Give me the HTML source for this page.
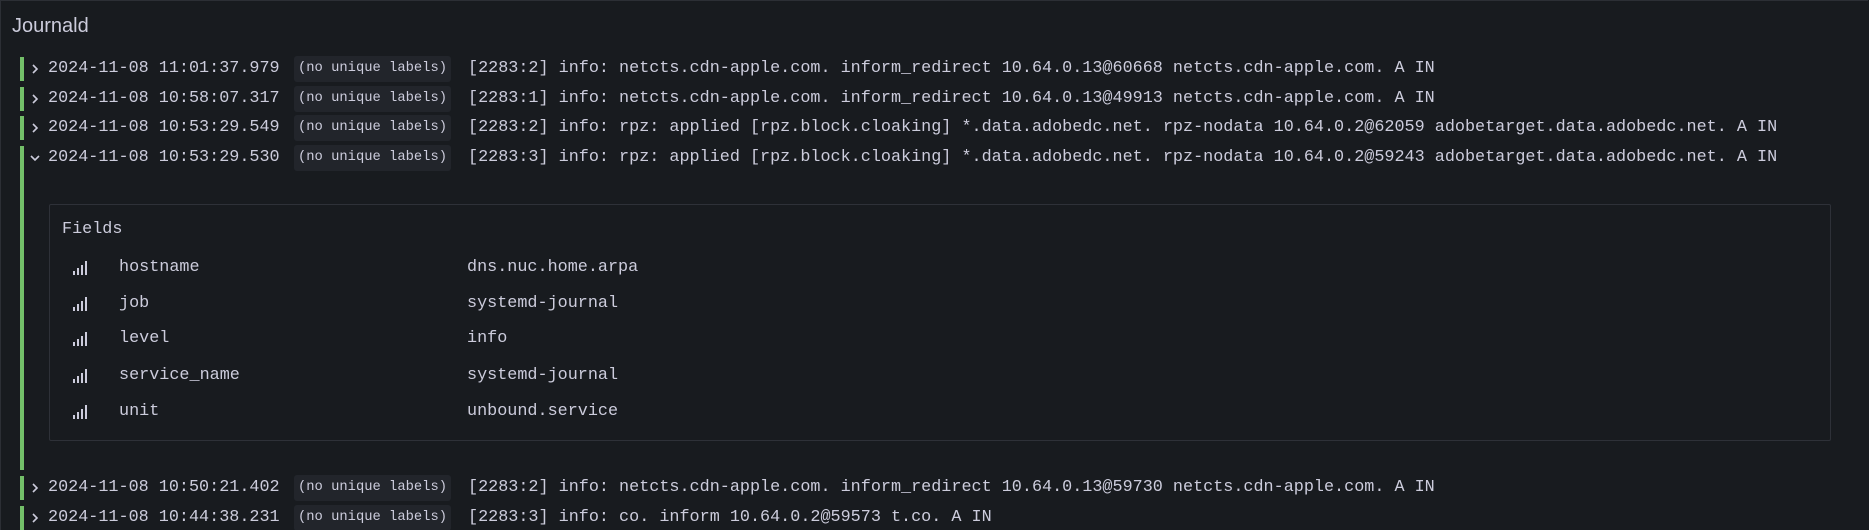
<!DOCTYPE html>
<html><head><meta charset="utf-8"><style>
html,body{margin:0;padding:0;background:#181b1f;width:1869px;height:530px;overflow:hidden}
body{position:relative;font-family:"Liberation Mono",monospace;color:#ccccdc}
.panel{position:absolute;left:0;top:0;width:1868px;height:530px;border-top:1px solid #2c2f35;border-left:1px solid #2c2f35;box-sizing:border-box}
.title{position:absolute;left:12px;top:15px;font-family:"Liberation Sans",sans-serif;font-size:20px;color:#ccccdc}
.bar{position:absolute;left:20px;width:4px;background:#73bf69}
.row{position:absolute;left:0;height:26px;line-height:26px;font-size:16.8px;white-space:pre}
.chev{position:absolute;left:30px;top:8px;width:10px;height:10px}
.ts{position:absolute;left:48px}
.badge{position:absolute;left:294px;top:0;width:157px;height:26px;background:#22252b;border-radius:3px;font-size:13.8px;text-align:center;line-height:26px}
.msg{position:absolute;left:468px}
.box{position:absolute;left:49px;top:204px;width:1782px;height:237px;border:1px solid #2e3138;border-radius:2px;box-sizing:border-box}
.fl{position:absolute;font-size:16.8px;white-space:pre;line-height:20px}
.ic{position:absolute;left:73px;width:14px;height:14px}
</style></head><body>
<div class="panel"></div>
<div class="title">Journald</div>

<div class="bar" style="top:57px;height:24px"></div>
<div class="bar" style="top:87px;height:24px"></div>
<div class="bar" style="top:116px;height:24px"></div>
<div class="bar" style="top:146px;height:324px"></div>
<div class="bar" style="top:476px;height:24px"></div>
<div class="bar" style="top:506px;height:24px"></div>

<div class="row" style="top:56px"><svg class="chev" viewBox="0 0 10 10"><path d="M3 1L7 5L3 9" stroke="#ccccdc" stroke-width="1.6" fill="none"/></svg><span class="ts">2024-11-08 11:01:37.979</span><span class="badge">(no unique labels)</span><span class="msg">[2283:2] info: netcts.cdn-apple.com. inform_redirect 10.64.0.13@60668 netcts.cdn-apple.com. A IN</span></div>
<div class="row" style="top:86px"><svg class="chev" viewBox="0 0 10 10"><path d="M3 1L7 5L3 9" stroke="#ccccdc" stroke-width="1.6" fill="none"/></svg><span class="ts">2024-11-08 10:58:07.317</span><span class="badge">(no unique labels)</span><span class="msg">[2283:1] info: netcts.cdn-apple.com. inform_redirect 10.64.0.13@49913 netcts.cdn-apple.com. A IN</span></div>
<div class="row" style="top:115px"><svg class="chev" viewBox="0 0 10 10"><path d="M3 1L7 5L3 9" stroke="#ccccdc" stroke-width="1.6" fill="none"/></svg><span class="ts">2024-11-08 10:53:29.549</span><span class="badge">(no unique labels)</span><span class="msg">[2283:2] info: rpz: applied [rpz.block.cloaking] *.data.adobedc.net. rpz-nodata 10.64.0.2@62059 adobetarget.data.adobedc.net. A IN</span></div>
<div class="row" style="top:145px"><svg class="chev" viewBox="0 0 10 10"><path d="M1 3L5 7L9 3" stroke="#ccccdc" stroke-width="1.6" fill="none"/></svg><span class="ts">2024-11-08 10:53:29.530</span><span class="badge">(no unique labels)</span><span class="msg">[2283:3] info: rpz: applied [rpz.block.cloaking] *.data.adobedc.net. rpz-nodata 10.64.0.2@59243 adobetarget.data.adobedc.net. A IN</span></div>

<div class="box"></div>
<div class="fl" style="left:62px;top:220px">Fields</div>

<svg class="ic" style="top:261px" viewBox="0 0 14 14"><rect x="0" y="10" width="2" height="4" fill="#ccccdc"/><rect x="4" y="7" width="2" height="7" fill="#ccccdc"/><rect x="8" y="4" width="2" height="10" fill="#ccccdc"/><rect x="12" y="0" width="2" height="14" fill="#ccccdc"/></svg>
<div class="fl" style="left:119px;top:258px">hostname</div><div class="fl" style="left:467px;top:258px">dns.nuc.home.arpa</div>
<svg class="ic" style="top:297px" viewBox="0 0 14 14"><rect x="0" y="10" width="2" height="4" fill="#ccccdc"/><rect x="4" y="7" width="2" height="7" fill="#ccccdc"/><rect x="8" y="4" width="2" height="10" fill="#ccccdc"/><rect x="12" y="0" width="2" height="14" fill="#ccccdc"/></svg>
<div class="fl" style="left:119px;top:294px">job</div><div class="fl" style="left:467px;top:294px">systemd-journal</div>
<svg class="ic" style="top:332px" viewBox="0 0 14 14"><rect x="0" y="10" width="2" height="4" fill="#ccccdc"/><rect x="4" y="7" width="2" height="7" fill="#ccccdc"/><rect x="8" y="4" width="2" height="10" fill="#ccccdc"/><rect x="12" y="0" width="2" height="14" fill="#ccccdc"/></svg>
<div class="fl" style="left:119px;top:329px">level</div><div class="fl" style="left:467px;top:329px">info</div>
<svg class="ic" style="top:369px" viewBox="0 0 14 14"><rect x="0" y="10" width="2" height="4" fill="#ccccdc"/><rect x="4" y="7" width="2" height="7" fill="#ccccdc"/><rect x="8" y="4" width="2" height="10" fill="#ccccdc"/><rect x="12" y="0" width="2" height="14" fill="#ccccdc"/></svg>
<div class="fl" style="left:119px;top:366px">service_name</div><div class="fl" style="left:467px;top:366px">systemd-journal</div>
<svg class="ic" style="top:405px" viewBox="0 0 14 14"><rect x="0" y="10" width="2" height="4" fill="#ccccdc"/><rect x="4" y="7" width="2" height="7" fill="#ccccdc"/><rect x="8" y="4" width="2" height="10" fill="#ccccdc"/><rect x="12" y="0" width="2" height="14" fill="#ccccdc"/></svg>
<div class="fl" style="left:119px;top:402px">unit</div><div class="fl" style="left:467px;top:402px">unbound.service</div>

<div class="row" style="top:475px"><svg class="chev" viewBox="0 0 10 10"><path d="M3 1L7 5L3 9" stroke="#ccccdc" stroke-width="1.6" fill="none"/></svg><span class="ts">2024-11-08 10:50:21.402</span><span class="badge">(no unique labels)</span><span class="msg">[2283:2] info: netcts.cdn-apple.com. inform_redirect 10.64.0.13@59730 netcts.cdn-apple.com. A IN</span></div>
<div class="row" style="top:505px"><svg class="chev" viewBox="0 0 10 10"><path d="M3 1L7 5L3 9" stroke="#ccccdc" stroke-width="1.6" fill="none"/></svg><span class="ts">2024-11-08 10:44:38.231</span><span class="badge">(no unique labels)</span><span class="msg">[2283:3] info: co. inform 10.64.0.2@59573 t.co. A IN</span></div>
</body></html>
